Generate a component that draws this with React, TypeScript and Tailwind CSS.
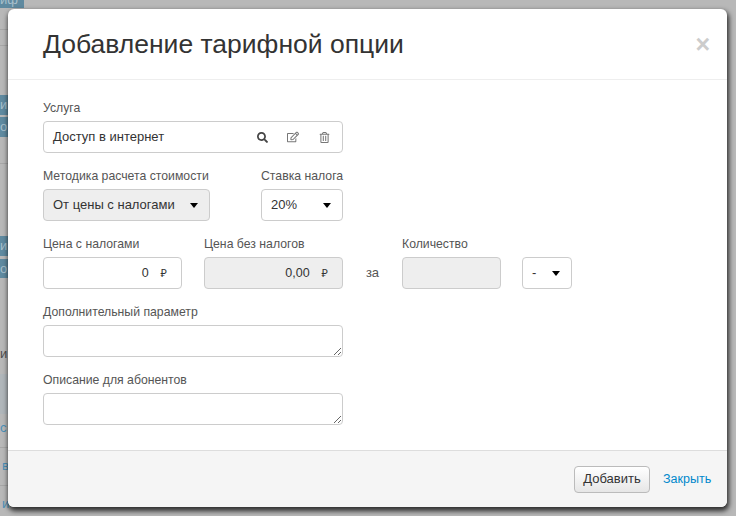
import React from "react";
import { FaSearch, FaRegEdit, FaRegTrashAlt } from "react-icons/fa";

const Caret = () => <span className="w-0 h-0 border-x-[4.5px] border-x-transparent border-t-[5px] border-t-black" />;

const Label: React.FC<{ children: React.ReactNode; className?: string }> = ({ children, className = "" }) => (
  <div className={`h-[18px] mt-px mb-[4px] text-[12.25px] leading-[18px] text-[#555] whitespace-nowrap ${className}`}>{children}</div>
);

const Select: React.FC<{ text: string; gray?: boolean; className: string }> = ({ text, gray, className }) => (
  <div className={`h-8 flex items-center justify-between pl-[9px] pr-[11px] border border-[#ccc] rounded-[4px] text-[13px] text-[#333] ${gray ? "bg-[#eee]" : "bg-white"} ${className}`}>
    <span>{text}</span>
    <Caret />
  </div>
);

const Money: React.FC<{ value: string; gray?: boolean }> = ({ value, gray }) => (
  <div className={`w-[139px] h-8 flex items-center justify-end gap-[12px] pr-[14px] border border-[#ccc] rounded-[4px] text-[12.5px] text-[#333] ${gray ? "bg-[#eee]" : "bg-white"}`}>
    <span>{value}</span>
    <span className="text-[11px] font-['Noto_Sans',sans-serif]">₽</span>
  </div>
);

export default function App() {
  return (
    <div className="relative w-[736px] h-[516px] overflow-hidden bg-[#b8b8b8] font-['Liberation_Sans',Arial,sans-serif]">
      {/* page behind the overlay */}
      <div className="relative w-[30px] h-full text-[13px] text-[#4d4d4d]">
        <div className="absolute left-0 top-[-9px] w-[24px] h-[17px] bg-[#5f8aa0] text-[#a9c0cc] leading-[17px]">иф</div>
        <div className="absolute left-0 top-[29px] w-[8px] h-px bg-[#a6a6a6]" />
        <div className="absolute left-0 top-[45px] w-[8px] h-px bg-[#a6a6a6]" />
        <div className="absolute left-0 top-[95px] w-[8px] h-[20px] bg-[#5f8aa0] text-[#a9c0cc] leading-[20px]">и</div>
        <div className="absolute left-0 top-[117px] w-[8px] h-[20px] bg-[#5f8aa0] text-[#a9c0cc] leading-[20px] whitespace-nowrap">ои</div>
        <div className="absolute left-0 top-[163px] w-[8px] h-px bg-[#a6a6a6]" />
        <div className="absolute left-0 top-[236px] w-[8px] h-[20px] bg-[#5f8aa0] text-[#a9c0cc] leading-[20px]">и</div>
        <div className="absolute left-0 top-[259px] w-[8px] h-[19px] bg-[#5f8aa0] text-[#a9c0cc] leading-[19px] whitespace-nowrap">ои</div>
        <div className="absolute left-0 top-[346px] leading-[16px]">и</div>
        <div className="absolute left-0 top-[374px] w-[8px] h-[40px] bg-[#b0b6ba]" />
        <div className="absolute left-0 top-[420px] leading-[16px] text-[#4a90b8]">с</div>
        <div className="absolute left-0 top-[447px] w-[8px] h-px bg-[#a6a6a6]" />
        <div className="absolute left-[2px] top-[458px] leading-[16px] text-[#4a90b8]">в</div>
        <div className="absolute left-0 top-[485px] w-[8px] h-px bg-[#a6a6a6]" />
        <div className="absolute left-[2px] top-[496px] leading-[16px] text-[#4a90b8]">и</div>
      </div>

      {/* modal */}
      <div className="absolute left-2 top-[9px] w-[719px] h-[498px] flex flex-col bg-white rounded-[6px] shadow-[1px_3px_5px_1px_rgba(0,0,0,0.75)]">
        <div className="h-[71px] shrink-0 flex items-center justify-between pl-[35px] pr-[17px] border-b border-[#eee]">
          <h3 className="text-[26.5px] text-[#333] leading-none">Добавление тарифной опции</h3>
          <span className="text-[25px] font-bold leading-none text-[#ccc]">×</span>
        </div>

        <div className="flex-1 flex flex-col gap-[13px] pl-[35px] pt-[18px]">
          <div>
            <Label>Услуга</Label>
            <div className="w-[300px] h-8 flex items-center pl-[9px] border border-[#ccc] rounded-[4px] text-[13px] text-[#333]">
              <span className="flex-1">Доступ в интернет</span>
              <FaSearch className="text-[11px] text-[#444] mr-[19px]" />
              <FaRegEdit className="text-[12px] text-[#777] mr-[20px]" />
              <FaRegTrashAlt className="text-[11px] text-[#777] mr-[12px]" />
            </div>
          </div>

          <div className="flex gap-[51px]">
            <div className="w-[167px]">
              <Label>Методика расчета стоимости</Label>
              <Select text="От цены с налогами" gray className="w-[167px]" />
            </div>
            <div>
              <Label>Ставка налога</Label>
              <Select text="20%" className="w-[82px]" />
            </div>
          </div>

          <div className="flex">
            <div>
              <Label>Цена с налогами</Label>
              <Money value="0" />
            </div>
            <div className="ml-[22px]">
              <Label>Цена без налогов</Label>
              <Money value="0,00" gray />
            </div>
            <div className="w-[59px] h-8 mt-[23px] flex items-center justify-center text-[13px] text-[#555]">за</div>
            <div>
              <Label>Количество</Label>
              <div className="w-[99px] h-8 border border-[#ccc] rounded-[4px] bg-[#eee]" />
            </div>
            <div className="ml-[21px] mt-[23px]">
              <Select text="-" className="w-[50px]" />
            </div>
          </div>

          <div>
            <Label>Дополнительный параметр</Label>
            <textarea className="block w-[300px] h-8 border border-[#ccc] rounded-[4px] bg-white" />
          </div>

          <div>
            <Label>Описание для абонентов</Label>
            <textarea className="block w-[300px] h-8 border border-[#ccc] rounded-[4px] bg-white" />
          </div>
        </div>

        <div className="h-[57px] shrink-0 flex items-center justify-end gap-[13px] pr-[15px] border-t border-[#ddd] bg-[#f5f5f5] rounded-b-[6px]">
          <button className="w-[76px] h-[27px] border border-[#bbb] rounded-[4px] bg-gradient-to-b from-white to-[#e6e6e6] text-[13px] text-[#333]">Добавить</button>
          <a className="w-[49px] text-[12.5px] text-[#0088cc] whitespace-nowrap">Закрыть</a>
        </div>
      </div>
    </div>
  );
}
